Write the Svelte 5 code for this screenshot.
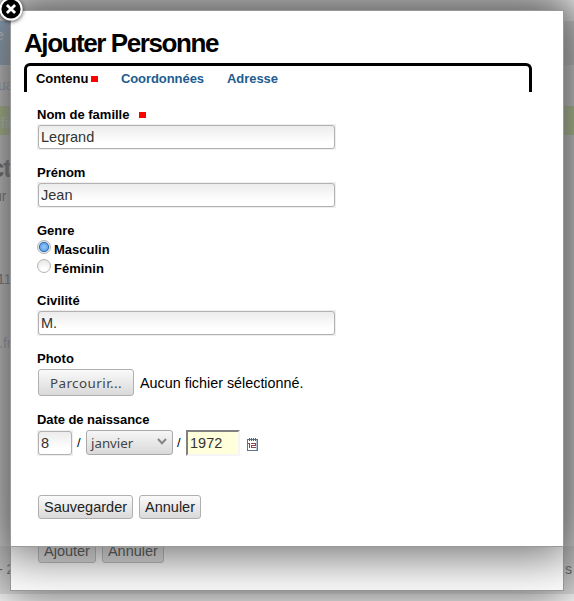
<script>
  const tabs = [
    { label: 'Contenu', required: true, current: true },
    { label: 'Coordonnées' },
    { label: 'Adresse' }
  ];
  let gender = $state('m');
</script>

<div class="page">
  <div class="backdrop">
    <div class="nav"></div>
    <div class="band"></div>
    <div class="foot"></div>
    <span class="ghost light" style:top="28px" style:left="-4px">e</span>
    <span class="ghost blue" style:top="78px" style:left="-2px">ua</span>
    <span class="ghost light" style:top="116px" style:left="1px">fic</span>
    <span class="ghost big">ct</span>
    <span class="ghost dark" style:top="189px" style:left="-6px">ur</span>
    <span class="ghost dark" style:top="272px" style:left="-3px">11</span>
    <span class="ghost blue" style:top="336px" style:left="-1px">.fr</span>
    <span class="ghost dark" style:top="562px" style:left="-2px">- 2</span>
    <span class="ghost dark" style:top="562px" style:left="565px">s</span>
  </div>

  <div class="modal back">
    <div class="buttons">
      <button>Ajouter</button><button>Annuler</button>
    </div>
  </div>

  <div class="modal front">
    <h1>Ajouter Personne</h1>
    <div class="tabs">
      {#each tabs as tab}
        <a href="#{tab.label}" class:current={tab.current}>{tab.label}{#if tab.required}<i class="req"></i>{/if}</a>
      {/each}
    </div>

    <form>
      <div class="field">
        <label for="nom">Nom de famille <i class="req"></i></label>
        <div class="box"><input id="nom" value="Legrand" /></div>
      </div>
      <div class="field">
        <label for="prenom">Prénom</label>
        <div class="box"><input id="prenom" value="Jean" /></div>
      </div>
      <div class="field genre">
        <span class="label">Genre</span>
        <label class="option"><input type="radio" bind:group={gender} value="m" />Masculin</label>
        <label class="option"><input type="radio" bind:group={gender} value="f" />Féminin</label>
      </div>
      <div class="field">
        <label for="civ">Civilité</label>
        <div class="box"><input id="civ" value="M." /></div>
      </div>
      <div class="field photo">
        <span class="label">Photo</span>
        <div class="file"><button type="button" class="browse">Parcourir...</button><span>Aucun fichier sélectionné.</span></div>
      </div>
      <div class="field birth">
        <span class="label date-label">Date de naissance</span>
        <div class="date">
          <div class="box day"><input value="8" /></div>
          <span class="sep">/</span>
          <div class="select">
            <span>janvier</span>
            <svg width="10" height="7" viewBox="0 0 10 7"><path d="M1 1 L5 5.2 L9 1" fill="none" stroke="#858585" stroke-width="2" /></svg>
          </div>
          <span class="sep">/</span>
          <input class="year" value="1972" />
          <svg class="cal" width="11" height="13" viewBox="0 0 11 13" shape-rendering="crispEdges">
            <rect x="0" y="1" width="11" height="12" fill="#5f7488" />
            <rect x="1" y="2" width="8" height="10" fill="#fff" />
            <rect x="9" y="2" width="1" height="10" fill="#b4c6d8" />
            <path d="M2 0h1v3h-1zM4 0h1v3h-1zM6 0h1v3h-1zM8 0h1v3h-1z" fill="#55606c" />
            <path d="M1 5h2v5h-1v-4h-1zM4 5h5v3h-4v1h4v1h-5v-3h4v-1h-4z" fill="#8d4454" />
          </svg>
        </div>
      </div>
      <div class="buttons">
        <button type="button">Sauvegarder</button><button type="button">Annuler</button>
      </div>
    </form>

    <svg class="close" width="32" height="32" viewBox="0 0 32 32">
      <circle cx="16" cy="16" r="10.6" fill="#000" stroke="#fff" stroke-width="2" />
      <path d="M12.9 12.9 L19.1 19.1 M19.1 12.9 L12.9 19.1" stroke="#fff" stroke-width="2.8" stroke-linecap="square" />
    </svg>
  </div>
</div>

<style>
  .page {
    position: relative;
    width: 574px;
    height: 601px;
    overflow: hidden;
    background: #fff;
    color: #000;
    font-family: 'Liberation Sans', Arial, sans-serif;
    font-size: 13px;
  }
  .page * { box-sizing: border-box; }
  .backdrop { position: absolute; inset: 0; background: #fff; }
  .nav { position: absolute; left: 0; top: 21px; width: 574px; height: 44px; background: linear-gradient(90deg, #86b4e0 50%, #dedede 50%); }
  .band { position: absolute; left: 0; top: 106px; width: 574px; height: 29px; background: #c3ea78; }
  .foot { position: absolute; left: 0; top: 546px; width: 574px; height: 48px; background: #e4e4e4; }
  .ghost { position: absolute; font-size: 14px; line-height: 15px; color: #fff; }
  .ghost.blue { color: #7fa0c0; }
  .ghost.dark { color: #444; }
  .ghost.big { top: 153px; left: -10px; font-size: 26px; line-height: 30px; font-weight: bold; letter-spacing: -1.3px; color: #333; }

  .modal {
    position: absolute;
    left: 10px;
    width: 554px;
    background: #fff;
    border: 1px solid #999;
    box-shadow: 0 0 48px 8px #666;
  }
  .back { top: 10px; height: 581px; padding: 528px 0 0 26px; box-shadow: 0 0 46px 6px #707070; }
  .front { top: 10px; height: 537px; padding: 17px 0 0 13px; }
  .close { position: absolute; left: -16px; top: -18px; filter: drop-shadow(0 1px 2px rgba(0, 0, 0, 0.7)); }

  h1 { margin: 0; font-size: 26px; line-height: 30px; letter-spacing: -1.42px; }
  .tabs {
    display: flex;
    width: 508px;
    height: 29px;
    margin-top: 5px;
    padding: 5px 0 0 9px;
    border: 3px solid #000;
    border-bottom: 0;
    border-radius: 6px 6px 0 0;
    font-weight: bold;
    line-height: 15px;
  }
  .tabs a { color: #205c90; text-decoration: none; margin-right: 23px; letter-spacing: -0.06px; }
  .tabs a.current { color: #000; margin-right: 22.6px; }
  .req { display: inline-block; width: 7px; height: 6px; background: #f00; margin-left: 6px; position: relative; top: -1px; }
  .tabs .req { margin-left: 3px; }

  form { padding: 15px 0 0 13px; }
  .field { height: 58px; font-weight: bold; }
  .field > label, .label { display: block; height: 17px; line-height: 15px; }
  .box { width: 299px; height: 26px; padding: 1px; background: #eee; }
  .box input {
    display: block;
    width: 100%;
    height: 24px;
    margin: 0;
    padding: 0 2px;
    border: 1px solid #b2b2b2;
    border-radius: 3px;
    background: linear-gradient(#ececec, #fff 75%);
    font: 14.5px 'Liberation Sans', Arial, sans-serif;
    color: #333;
    outline: 0;
  }
  .genre { height: 70px; }
  .field > .option { display: flex; height: 19px; line-height: 19px; }
  .option input {
    appearance: none;
    width: 14px;
    height: 14px;
    margin: 0 3px 0 0;
    border: 1px solid #b4b6b0;
    border-radius: 50%;
    background: radial-gradient(circle at 50% 85%, #fff 20%, #e2e2df);
  }
  .option input:checked {
    background: radial-gradient(circle at 50% 50%, #9cc8f5 0, #69a8ec 3.6px, #2769b5 4.6px, #e5eaf0 5.4px);
  }
  .file { display: flex; align-items: center; height: 29px; font-weight: normal; font-size: 14.35px; }
  .file span { padding-top: 1px; }
  .browse { width: 96px; height: 27px; margin: 0 6px 0 1px; padding-top: 1px; font: 13.4px 'Noto Sans', sans-serif; letter-spacing: 0.45px; color: #444; }
  .photo { height: 61px; }
  .date-label { letter-spacing: -0.06px; }
  .date { display: flex; padding-top: 1px; }
  .day { width: 36px; }
  .sep { width: 13px; padding: 5px 0 0 4px; font-weight: normal; line-height: 15px; }
  .select {
    display: flex;
    align-items: center;
    justify-content: space-between;
    width: 87px;
    height: 25px;
    padding: 1px 5px 0 4px;
    border: 1px solid #aaa;
    border-radius: 3px;
    background: linear-gradient(#f6f6f6, #d9d9d9);
    font: 13.3px 'Noto Sans', sans-serif;
    color: #444;
  }
  .select svg { margin-top: -4px; }
  .year {
    width: 54px;
    height: 26px;
    padding: 0 2px;
    border: 2px solid #808080;
    border-right-color: #f5f5f5;
    border-bottom-color: #f5f5f5;
    background: #ffffdc;
    font: 14.5px 'Liberation Sans', Arial, sans-serif;
    color: #333;
  }
  .cal { margin: 8px 0 0 7px; }
  .birth { height: 83px; }
  .buttons { display: flex; gap: 6px; padding-left: 1px; }
  button {
    height: 24px;
    margin: 0;
    padding: 0 5px;
    border: 1px solid #b0b0b0;
    border-radius: 3px;
    background: linear-gradient(#fafafa, #d9d9d9);
    font: 14.5px 'Liberation Sans', Arial, sans-serif;
    color: #222;
    white-space: nowrap;
  }
</style>
